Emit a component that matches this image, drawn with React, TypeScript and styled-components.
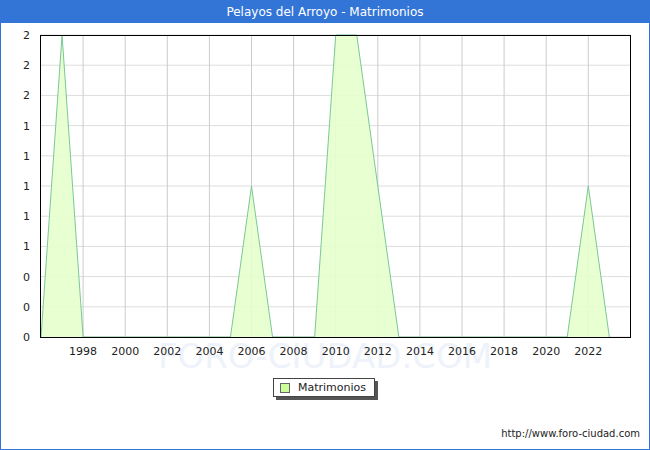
import styled, { createGlobalStyle } from "styled-components";

const Global = createGlobalStyle`
  body { margin: 0; font-family: "DejaVu Sans", Verdana, sans-serif; }
`;

const Frame = styled.div`
  width: 648px;
  height: 448px;
  border: 1px solid #3375d6;
  background: #fff;
  display: flex;
  flex-direction: column;
`;

const TitleBar = styled.div`
  height: 22px;
  background: #3375d6;
  color: #fff;
  font-size: 12px;
  display: flex;
  align-items: center;
  justify-content: center;
`;

const LegendRow = styled.div`
  display: flex;
  justify-content: center;
  margin-top: 10px;
  padding-right: 2px;
`;

const LegendBox = styled.div`
  display: flex;
  align-items: center;
  gap: 8px;
  height: 17px;
  padding: 0 8px 0 6px;
  border: 1px solid #444;
  box-shadow: 3px 3px 0 #555;
  font-size: 11px;
  color: #222;
`;

const Swatch = styled.span`
  width: 8px;
  height: 8px;
  border: 1px solid #666;
  background: #ccff99;
`;

const Footer = styled.div`
  margin-top: auto;
  padding: 0 9px 10px 0;
  text-align: right;
  font-size: 10px;
  color: #222;
`;

const data = [0, 2, 0, 0, 0, 0, 0, 0, 0, 0, 1, 0, 0, 0, 2, 2, 1, 0, 0, 0, 0, 0, 0, 0, 0, 0, 1, 0];
const X0 = 41, DX = 21.05, YB = 337, YT = 35;
const xs = (i: number) => X0 + i * DX;
const ys = (v: number) => YB - (v / 2) * (YB - YT);

function Chart() {
  const pts = data.map((v, i) => `${xs(i)},${ys(v)}`).join(" ");
  const area = `${xs(0)},${YB} ${pts} ${xs(data.length - 1)},${YB}`;
  const yLabels = ["2", "2", "2", "1", "1", "1", "1", "1", "0", "0", "0"];
  return (
    <svg width="648" height="345" viewBox="1 23 648 345" style={{ display: "block" }}>
      <text x="325" y="368" fontSize="34" fill="#eef2fa" textAnchor="middle" fontFamily="DejaVu Sans">FORO-CIUDAD.COM</text>
      {yLabels.map((_, i) => {
        const y = YT + i * 30.2;
        return <line key={i} x1="40" x2="630" y1={y} y2={y} stroke="#ddd" />;
      })}
      {Array.from({ length: 13 }, (_, k) => {
        const x = xs(2 + 2 * k);
        return <line key={k} x1={x} x2={x} y1={YT} y2={YB} stroke="#ccc" />;
      })}
      <polygon points={area} fill="#e6ffcc" fillOpacity="0.9" />
      <polyline points={pts} fill="none" stroke="#7ac896" strokeWidth="1" />
      <rect x="40.5" y="35.5" width="590" height="302" fill="none" stroke="#000" />
      {yLabels.map((l, i) => (
        <text key={i} x="30" y={YT + i * 30.2 + 4} fontSize="11" textAnchor="end" fill="#222" fontFamily="DejaVu Sans">{l}</text>
      ))}
      {Array.from({ length: 13 }, (_, k) => (
        <text key={k} x={xs(2 + 2 * k)} y="355" fontSize="11" textAnchor="middle" fill="#222" fontFamily="DejaVu Sans">{1998 + 2 * k}</text>
      ))}
    </svg>
  );
}

export default function App() {
  return (
    <Frame>
      <Global />
      <TitleBar>Pelayos del Arroyo - Matrimonios</TitleBar>
      <Chart />
      <LegendRow>
        <LegendBox>
          <Swatch />
          Matrimonios
        </LegendBox>
      </LegendRow>
      <Footer>http://www.foro-ciudad.com</Footer>
    </Frame>
  );
}
